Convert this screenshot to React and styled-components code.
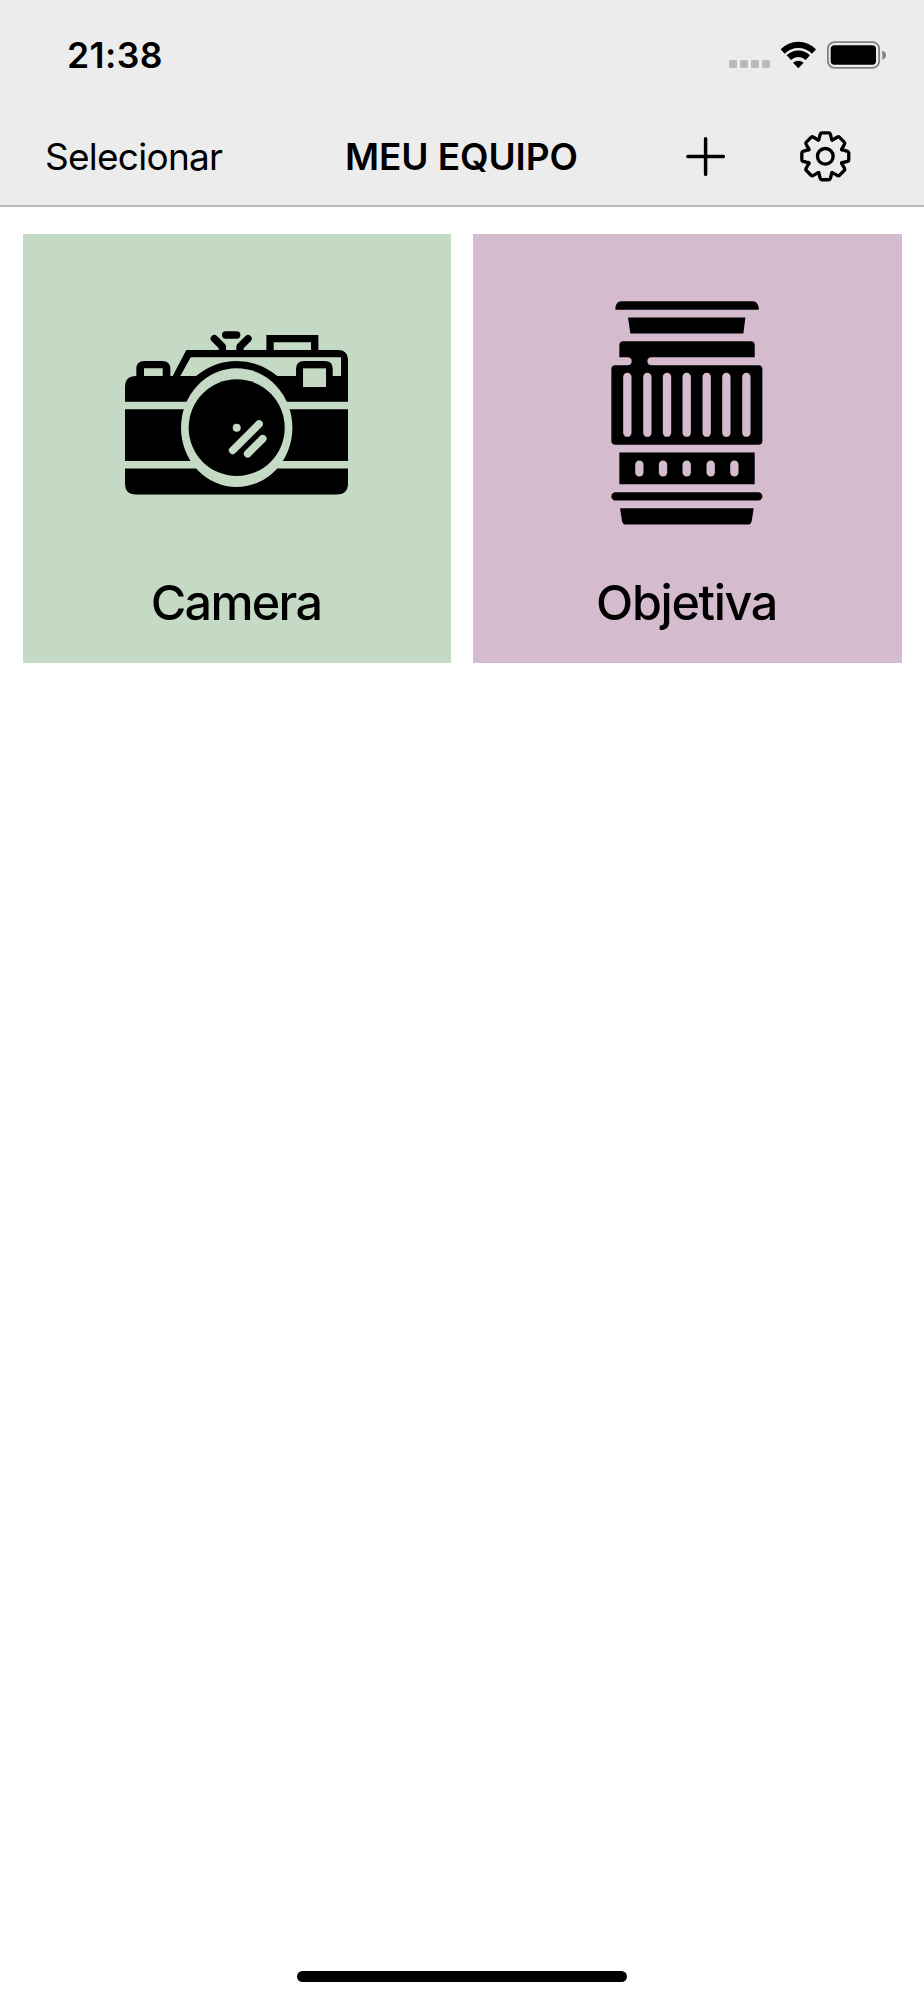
import React from "react";
import styled, { createGlobalStyle } from "styled-components";

const GlobalStyle = createGlobalStyle`
  * { box-sizing: border-box; }
  body {
    margin: 0;
    background: #fff;
    color: #000;
    font-family: Inter, "Liberation Sans", sans-serif;
  }
`;

const Screen = styled.div`
  width: 924px;
  height: 2000px;
  display: flex;
  flex-direction: column;
  background: #fff;
  overflow: hidden;
`;

const Header = styled.header`
  height: 207px;
  background: #ececec;
  border-bottom: 2px solid #b8b8b8;
`;

const StatusBar = styled.div`
  height: 110px;
  padding: 0 37.6px 0 67px;
  display: flex;
  align-items: center;
  justify-content: space-between;
`;

const Time = styled.span`
  padding-top: 2px;
  font-size: 35.5px;
  font-weight: 600;
  line-height: 44px;
  letter-spacing: 0.4px;
`;

const StatusIcons = styled.div`
  display: flex;
  align-items: center;
  svg { display: block; }
`;

const CellDots = styled.div`
  display: flex;
  gap: 3.2px;
  margin: 18px 10.2px 0 0;
`;

const CellDot = styled.i`
  width: 8px;
  height: 8px;
  border-radius: 2px;
  background: #b9b9b9;
`;

const Battery = styled.span`
  margin-left: 10px;
`;

const NavBar = styled.nav`
  height: 93px;
  padding: 0 73px 0 45px;
  display: grid;
  grid-template-columns: 300px 234px 1fr;
  align-items: center;
`;

const TextButton = styled.button`
  justify-self: start;
  border: 0;
  padding: 0;
  background: none;
  color: inherit;
  font: 400 37px/46px Inter, "Liberation Sans", sans-serif;
  letter-spacing: -0.75px;
`;

const Title = styled.h1`
  margin: 0;
  font-size: 37px;
  line-height: 46px;
  font-weight: 600;
  letter-spacing: -0.1px;
  white-space: nowrap;
`;

const Actions = styled.div`
  justify-self: end;
  display: flex;
  align-items: center;
  gap: 75px;
`;

const IconButton = styled.button`
  border: 0;
  padding: 0;
  background: none;
  color: inherit;
  svg { display: block; }
`;

const Grid = styled.main`
  flex: 1;
  padding: 27.4px 22.5px 0;
  display: grid;
  grid-template-columns: 1fr 1fr;
  grid-auto-rows: 428.5px;
  gap: 22.2px;
  align-content: start;
`;

const Card = styled.section`
  display: flex;
  flex-direction: column;
  align-items: center;
  padding-top: 66.8px;
  background: ${(p) => p.$color};
  svg { display: block; flex: none; }
`;

const Label = styled.h2`
  margin: 48.5px 0 0;
  padding-right: 1.5px;
  font-size: 48.5px;
  line-height: 60px;
  font-weight: 500;
  letter-spacing: ${(p) => p.$tracking};
`;

const HomeIndicator = styled.div`
  width: 330px;
  height: 11px;
  margin: 0 auto 18px;
  border-radius: 6px;
  background: #000;
`;

function WifiIcon() {
  return (
    <svg width="36.67" height="28" viewBox="210 33 110 84">
      <path d="M212 58A73 73 0 0 1 318 58L306 71A58 58 0 0 0 224 71Z" />
      <path d="M230 76A50 50 0 0 1 300 76L287 90A32 32 0 0 0 243 90Z" />
      <path d="M249 98Q265 86 281 98L265 115Z" />
    </svg>
  );
}

function BatteryIcon() {
  return (
    <svg width="59.33" height="28" viewBox="351 34 178 84">
      <rect x="353.5" y="37.5" width="154" height="77" rx="20" fill="none" stroke="#808080" strokeWidth="5.5" />
      <rect x="362" y="47" width="136" height="58" rx="11" />
      <path d="M517 63C525 66 528 70 528 76S525 87 517 90Z" fill="#808080" />
    </svg>
  );
}

function PlusIcon() {
  return (
    <svg width="39.2" height="39.2" viewBox="0 0 118 118" fill="none" stroke="#000" strokeWidth="10.5" strokeLinecap="round">
      <path d="M59 5.5V112.5M5.5 59H112.5" />
    </svg>
  );
}

const TOOTH_ANGLES = [0, 45, 90, 135, 180, 225, 270, 315];

function GearIcon() {
  return (
    <svg width="50.6" height="50.6" viewBox="-76 -76 152 152" fill="none" stroke="#000" strokeWidth="10" strokeLinejoin="round" strokeLinecap="round">
      {TOOTH_ANGLES.map((angle) => (
        <path
          key={angle}
          transform={`rotate(${angle})`}
          d="M-20.3 -49Q-18.4 -49.8 -17.8 -57L-15 -67Q-14 -70.5 -10 -70.5H10Q14 -70.5 15 -67L17.8 -57Q18.4 -49.8 20.3 -49"
        />
      ))}
      <circle r="23.5" />
    </svg>
  );
}

function CameraIcon({ color }) {
  return (
    <svg width="223.4" height="223.4" viewBox="45 -57 670 670">
      <path d="M45 245V201Q45 168 78 168H188L229 90H684Q714 90 714 122V245Z" />
      <path d="M211 168L242 112H693V168H668V146Q668 123 645 123H582Q558 123 558 146V168H502Q446 123 380 123T258 168Z" fill={color} />
      <path d="M579 145H648V201H579Z" fill={color} />
      <path d="M79 169V147Q79 123 103 123H157Q181 123 181 147V169H158V145H102V169Z" />
      <path d="M469 92V45H625V92H603V67H491V92Z" />
      <path d="M347 45H380M313 56L337 80V92M414 56L390 80V92" fill="none" stroke="#000" strokeWidth="22" strokeLinecap="round" strokeLinejoin="round" />
      <path d="M45 268H714V423H45ZM45 445H714V490Q714 523 681 523H78Q45 523 45 490Z" />
      <ellipse cx="380" cy="323" rx="167" ry="178" fill={color} />
      <ellipse cx="380" cy="323" rx="144" ry="145" />
      <circle cx="380" cy="323" r="12" fill={color} />
      <path d="M368 391L447 312M413 401L458 356" fill="none" stroke={color} strokeWidth="23" strokeLinecap="round" />
    </svg>
  );
}

const GRIP_SLOTS = [82, 142, 201, 260, 320, 379, 439];
const SCALE_SLOTS = [118, 189, 260, 332, 403];

function LensIcon({ color }) {
  return (
    <svg width="223.4" height="223.4" viewBox="-72 33.5 670 670">
      <path d="M46 60V54Q49 34 63 34H459Q473 34 476 54V60Z" />
      <path d="M84 83H436L430 131H91Z" />
      <path d="M58 202V166Q58 154 70 154H452Q464 154 464 166V202H154Q142 203 142 214T154 226H475Q487 226 487 238V453Q487 465 475 465H46Q34 465 34 453V238Q34 226 46 226H83Q95 225 95 214T83 202Z" />
      {GRIP_SLOTS.map((x) => (
        <rect key={x} x={x - 12.5} y="249" width="25" height="192" rx="12.5" fill={color} />
      ))}
      <path d="M58 488H464V583H58Z" />
      {SCALE_SLOTS.map((x) => (
        <rect key={x} x={x - 12.5} y="512" width="25" height="48" rx="12.5" fill={color} />
      ))}
      <rect x="34" y="607" width="453" height="25" rx="12.5" />
      <path d="M60 655H461L455 693Q453 704 443 704H78Q68 704 66 693Z" />
    </svg>
  );
}

const ITEMS = [
  { name: "Camera", color: "#c5dac5", Icon: CameraIcon, tracking: "-1.7px" },
  { name: "Objetiva", color: "#d4bbce", Icon: LensIcon, tracking: "-1.35px" },
];

export default function App() {
  return (
    <Screen>
      <GlobalStyle />
      <Header>
        <StatusBar>
          <Time>21:38</Time>
          <StatusIcons>
            <CellDots>
              <CellDot />
              <CellDot />
              <CellDot />
              <CellDot />
            </CellDots>
            <WifiIcon />
            <Battery><BatteryIcon /></Battery>
          </StatusIcons>
        </StatusBar>
        <NavBar>
          <TextButton>Selecionar</TextButton>
          <Title>MEU EQUIPO</Title>
          <Actions>
            <IconButton aria-label="Adicionar"><PlusIcon /></IconButton>
            <IconButton aria-label="Ajustes"><GearIcon /></IconButton>
          </Actions>
        </NavBar>
      </Header>
      <Grid>
        {ITEMS.map(({ name, color, Icon, tracking }) => (
          <Card key={name} $color={color}>
            <Icon color={color} />
            <Label $tracking={tracking}>{name}</Label>
          </Card>
        ))}
      </Grid>
      <HomeIndicator />
    </Screen>
  );
}
